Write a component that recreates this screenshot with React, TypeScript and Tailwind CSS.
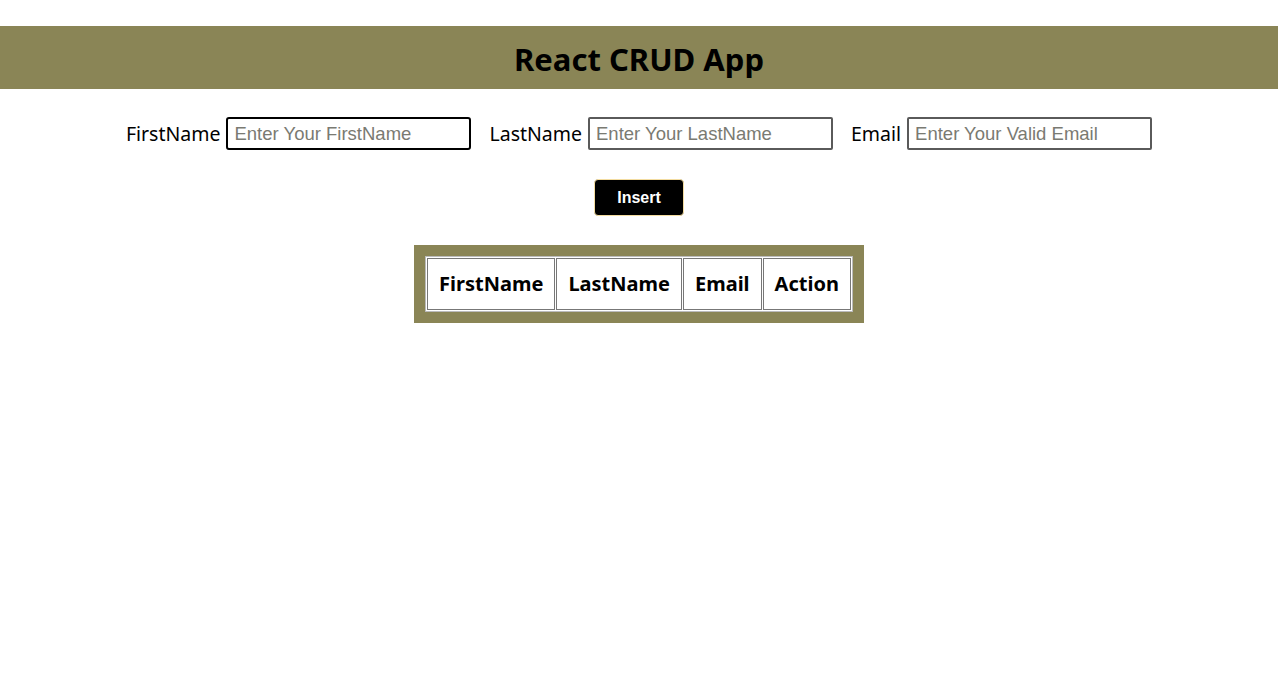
import React, { useState } from 'react'

type Row = {
  firstName: string
  lastName: string
  email: string
}

const fields = [
  { key: 'firstName', label: 'FirstName', placeholder: 'Enter Your FirstName' },
  { key: 'lastName', label: 'LastName', placeholder: 'Enter Your LastName' },
  { key: 'email', label: 'Email', placeholder: 'Enter Your Valid Email' },
] as const

const App = () => {
  const [form, setForm] = useState<Row>({ firstName: '', lastName: '', email: '' })
  const [rows, setRows] = useState<Row[]>([])

  const handleInsert = () => {
    if (!form.firstName && !form.lastName && !form.email) return
    setRows([...rows, form])
    setForm({ firstName: '', lastName: '', email: '' })
  }

  return (
    <div className="min-h-screen bg-white pt-[26px] font-['Noto_Sans',sans-serif] text-black">
      {/* HEADER */}
      <div className="h-[63px] bg-[#8a8556] flex items-center justify-center">
        <h1 className="text-[31px] font-bold leading-none mt-[3px]">React CRUD App</h1>
      </div>

      {/* FORM */}
      <div className="flex items-center justify-center gap-[18px] mt-[28px]">
        {fields.map((f, i) => (
          <div key={f.key} className="flex items-center gap-[6px]">
            <label className="text-[19.5px] leading-none">{f.label}</label>
            <input
              autoFocus={i === 0}
              value={form[f.key]}
              placeholder={f.placeholder}
              onChange={(e) => setForm({ ...form, [f.key]: e.target.value })}
              className={
                i === 0
                  ? "w-[245px] h-[33px] px-[6px] border-2 border-black rounded-[3px] outline-none font-['Liberation_Sans',sans-serif] text-[18.5px] placeholder:text-[#7a7a72]"
                  : "w-[245px] h-[33px] px-[6px] border-2 border-[#5a5a5a] rounded-[2px] outline-none font-['Liberation_Sans',sans-serif] text-[18.5px] placeholder:text-[#7a7a72]"
              }
            />
          </div>
        ))}
      </div>

      <div className="flex justify-center mt-[29px]">
        <button
          onClick={handleInsert}
          className="w-[90px] h-[37px] bg-black text-white rounded-[4px] border border-[#f3dca0] font-['Liberation_Sans',sans-serif] font-bold text-[16px]"
        >
          Insert
        </button>
      </div>

      {/* TABLE */}
      <div className="flex justify-center mt-[29px]">
        <div className="bg-[#8a8556] p-[11px]">
          <table className="bg-white border border-[#bbb] border-separate border-spacing-[1px]">
            <thead>
              <tr>
                {['FirstName', 'LastName', 'Email', 'Action'].map((h) => (
                  <th key={h} className="border border-[#777] h-[52px] px-[11px] text-[20px] font-bold">
                    {h}
                  </th>
                ))}
              </tr>
            </thead>
            <tbody>
              {rows.map((r, idx) => (
                <tr key={idx}>
                  <td className="border border-[#777] px-[11px] py-1">{r.firstName}</td>
                  <td className="border border-[#777] px-[11px] py-1">{r.lastName}</td>
                  <td className="border border-[#777] px-[11px] py-1">{r.email}</td>
                  <td className="border border-[#777] px-[11px] py-1">
                    <button onClick={() => setRows(rows.filter((_, j) => j !== idx))}>Delete</button>
                  </td>
                </tr>
              ))}
            </tbody>
          </table>
        </div>
      </div>
    </div>
  )
}

export default App
